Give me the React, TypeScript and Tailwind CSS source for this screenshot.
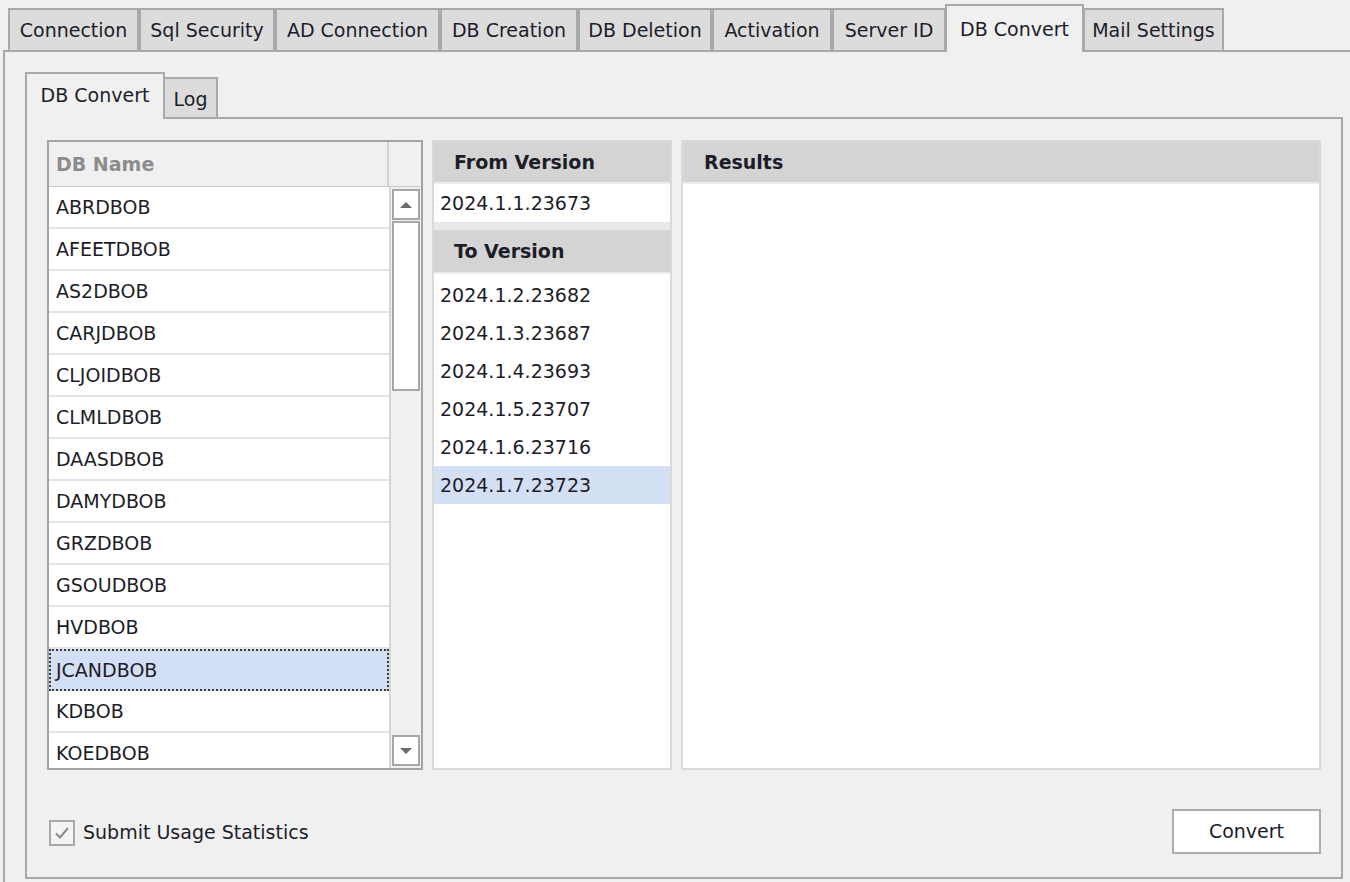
import React from "react";

const outerTabs = [
  { label: "Connection", w: "w-[131px]" },
  { label: "Sql Security", w: "w-[136px]" },
  { label: "AD Connection", w: "w-[165px]" },
  { label: "DB Creation", w: "w-[138px]" },
  { label: "DB Deletion", w: "w-[134px]" },
  { label: "Activation", w: "w-[120px]" },
  { label: "Server ID", w: "w-[114px]" },
  { label: "DB Convert", w: "w-[139px]", active: true },
  { label: "Mail Settings", w: "w-[141px]" },
];

const dbNames = [
  "ABRDBOB",
  "AFEETDBOB",
  "AS2DBOB",
  "CARJDBOB",
  "CLJOIDBOB",
  "CLMLDBOB",
  "DAASDBOB",
  "DAMYDBOB",
  "GRZDBOB",
  "GSOUDBOB",
  "HVDBOB",
  "JCANDBOB",
  "KDBOB",
  "KOEDBOB",
];

const toVersions = [
  "2024.1.2.23682",
  "2024.1.3.23687",
  "2024.1.4.23693",
  "2024.1.5.23707",
  "2024.1.6.23716",
  "2024.1.7.23723",
];

const Arrow = ({ down }: { down?: boolean }) => (
  <svg width="12" height="8" viewBox="0 0 12 8">
    {down ? (
      <path d="M0 1 L12 1 L6 7 Z" fill="#6b6b6b" />
    ) : (
      <path d="M0 7 L12 7 L6 1 Z" fill="#6b6b6b" />
    )}
  </svg>
);

const DbGrid = () => (
  <div className="w-[376px] h-[630px] border-2 border-[#a3a3a3] bg-white flex flex-col overflow-hidden">
    <div className="h-[45px] flex shrink-0 bg-[#f0f0f0] border-b border-[#c9c9c9]">
      <div className="w-[340px] border-r-2 border-[#d2d2d2] flex items-center pl-[7px] font-bold text-[#8c8c8c]">
        DB Name
      </div>
      <div className="flex-1" />
    </div>
    <div className="flex flex-1 min-h-0">
      <div className="w-[340px] flex flex-col overflow-hidden">
        {dbNames.map((name, i) => (
          <div
            key={name}
            className={
              i === 11
                ? "h-[42px] shrink-0 flex items-center pl-[5px] bg-[#d3dff4] border-2 border-dotted border-[#3a3a3a]"
                : "h-[42px] shrink-0 flex items-center pl-[7px] border-b-2 border-[#e4e4e4]"
            }
          >
            {name}
          </div>
        ))}
      </div>
      <div className="flex-1 bg-[#f0f0f0] border-l-2 border-[#d6d6d6] flex flex-col px-[1px] pt-[2px] pb-[2px]">
        <div className="h-[31px] bg-white border-2 border-[#a7a7a7] flex items-center justify-center">
          <Arrow />
        </div>
        <div className="h-[170px] mt-[1px] bg-white border-2 border-[#a7a7a7]" />
        <div className="flex-1" />
        <div className="h-[31px] bg-white border-2 border-[#a7a7a7] flex items-center justify-center">
          <Arrow down />
        </div>
      </div>
    </div>
  </div>
);

const VersionColumn = () => (
  <div className="w-[240px] h-[630px] border-2 border-[#dadada] bg-[#e8e8e8] flex flex-col">
    <div className="h-[40px] shrink-0 bg-[#d4d4d4] flex items-center pl-[20px] font-bold">
      From Version
    </div>
    <div className="h-[40px] shrink-0 bg-white border-t-2 border-[#ececec] flex items-center pl-[6px]">
      2024.1.1.23673
    </div>
    <div className="h-[8px] shrink-0" />
    <div className="h-[42px] shrink-0 bg-[#d4d4d4] flex items-center pl-[20px] font-bold">
      To Version
    </div>
    <div className="flex-1 bg-white border-t-2 border-[#ececec] pt-[2px] flex flex-col">
      {toVersions.map((v, i) => (
        <div
          key={v}
          className={
            i === 5
              ? "h-[38px] flex items-center pl-[6px] bg-[#d3dff3]"
              : "h-[38px] flex items-center pl-[6px]"
          }
        >
          {v}
        </div>
      ))}
    </div>
  </div>
);

const ResultsPanel = () => (
  <div className="w-[640px] h-[630px] border-2 border-[#dadada] bg-white flex flex-col">
    <div className="h-[40px] shrink-0 bg-[#d4d4d4] flex items-center pl-[21px] font-bold">
      Results
    </div>
    <div className="flex-1 border-t-2 border-[#ececec]" />
  </div>
);

export default function App() {
  return (
    <div className="w-[1350px] h-[882px] overflow-hidden bg-[#f0f0f0] text-[19px] text-[#1d1d29] font-['DejaVu_Sans',sans-serif] flex flex-col">
      {/* main tab strip */}
      <div className="h-[50px] flex items-end pl-[8px] shrink-0">
        {outerTabs.map((t) =>
          t.active ? (
            <div
              key={t.label}
              className={`${t.w} h-[48px] -mb-[2px] relative z-10 bg-[#f0f0f0] border-2 border-b-0 border-[#a9a9a9] flex items-start justify-center pt-[9px] -mx-[1px]`}
            >
              {t.label}
            </div>
          ) : (
            <div
              key={t.label}
              className={`${t.w} h-[42px] bg-[#dcdcdc] border-2 border-b-0 border-[#a9a9a9] flex items-center justify-center`}
            >
              {t.label}
            </div>
          )
        )}
      </div>

      <div className="ml-[3px] flex-1 border-l-2 border-t-2 border-[#a9a9a9] pl-[20px] pt-[20px]">
        {/* inner tab strip */}
        <div className="h-[45px] flex items-end">
          <div className="w-[140px] h-[47px] -mb-[2px] relative z-10 bg-[#f0f0f0] border-2 border-b-0 border-[#a9a9a9] flex items-center justify-center pb-[3px]">
            DB Convert
          </div>
          <div className="w-[53px] h-[40px] bg-[#dcdcdc] border-2 border-b-0 border-l-0 border-[#a9a9a9] flex items-center justify-center pt-[3px]">
            Log
          </div>
        </div>

        <div className="w-[1318px] h-[762px] border-2 border-[#a9a9a9] flex flex-col pl-[20px] pr-[20px] pt-[21px] pb-[23px]">
          <div className="flex gap-[9px]">
            <DbGrid />
            <VersionColumn />
            <ResultsPanel />
          </div>

          <div className="flex items-center justify-between mt-[39px] h-[45px]">
            <label className="flex items-center gap-[8px] pl-[2px] pt-[2px]">
              <span className="w-[26px] h-[26px] border-2 border-[#a9a9a9] bg-[#f4f4f4] flex items-center justify-center">
                <svg width="16" height="14" viewBox="0 0 16 14">
                  <path d="M2 7.5 L6 11.5 L14 2" fill="none" stroke="#8a8a8a" strokeWidth="2" />
                </svg>
              </span>
              Submit Usage Statistics
            </label>
            <button className="w-[149px] h-[45px] bg-white border-2 border-[#adadad] flex items-center justify-center">
              Convert
            </button>
          </div>
        </div>
      </div>
    </div>
  );
}
